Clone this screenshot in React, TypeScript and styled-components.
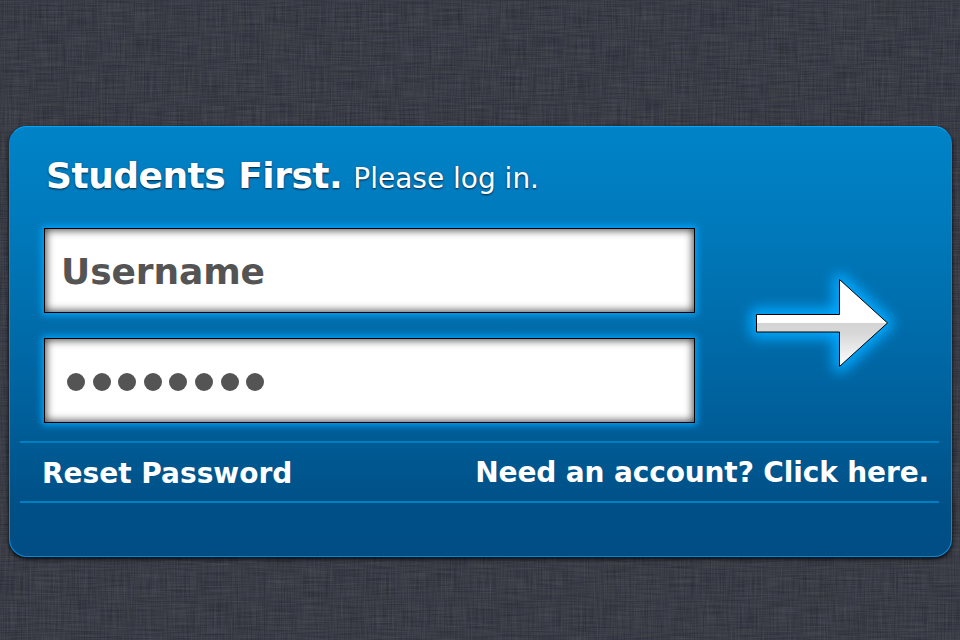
import React from "react";
import styled, { createGlobalStyle } from "styled-components";

const GlobalStyle = createGlobalStyle`
  *, *::before, *::after { box-sizing: border-box; }
  body { margin: 0; background: #393c46; }
`;

const Screen = styled.main`
  position: relative;
  width: 960px;
  height: 640px;
  padding: 126px 8px 0 9px;
  overflow: hidden;
  background: #393c46;
  font-family: "DejaVu Sans", Verdana, sans-serif;
`;

const Linen = styled.svg`
  position: absolute;
  inset: 0;
  width: 960px;
  height: 640px;
`;

const Panel = styled.form`
  position: relative;
  display: flex;
  flex-direction: column;
  width: 943px;
  height: 431px;
  border: 1px solid #008ae0;
  border-top-color: #00a6fc;
  border-radius: 18px;
  background: linear-gradient(#0083c8 0%, #007abc 22%, #0064a0 60%, #005188 87%, #004d84 100%);
  box-shadow: 0 2px 4px rgba(0, 0, 0, 0.9);
`;

const Heading = styled.h1`
  display: flex;
  align-items: baseline;
  margin: 27px 0 0 36px;
  height: 74px;
  line-height: 44px;
  color: #fff;
  text-shadow: 0 1px 2px rgba(0, 20, 40, 0.85);
  white-space: nowrap;
`;

const Brand = styled.span`
  font-size: 36px;
  font-weight: 700;
  letter-spacing: -0.5px;
  word-spacing: 1px;
`;

const Prompt = styled.span`
  margin-left: 11px;
  font-size: 28px;
  font-weight: 400;
`;

const Credentials = styled.div`
  display: flex;
  height: 213px;
  padding-left: 34px;
`;

const Fields = styled.div`
  display: flex;
  flex-direction: column;
  gap: 25px;
`;

const Field = styled.label`
  display: flex;
  align-items: center;
  width: 651px;
  height: 85px;
  padding: 0 16px;
  border: 1px solid #000;
  background: #fff;
  color: #545454;
  font-size: 36px;
  font-weight: 700;
  box-shadow: 0 0 7px 2px #00a6ff, inset 0 0 9px 1px rgba(0, 0, 0, 0.75);
`;

const Value = styled.span`
  padding-top: 1px;
  letter-spacing: -0.1px;
`;

const Dots = styled.span`
  display: flex;
  gap: 7.6px;
  padding: 2px 0 0 6px;
`;

const Dot = styled.i`
  width: 18px;
  height: 18px;
  border-radius: 50%;
  background: #545454;
`;

const Submit = styled.button`
  width: 192px;
  height: 140px;
  margin: 24px 0 0 29px;
  padding: 0;
  border: 0;
  background: none;
  svg { display: block; overflow: visible; }
`;

const Links = styled.nav`
  display: flex;
  justify-content: space-between;
  align-items: center;
  width: 919px;
  height: 62px;
  margin-left: 10px;
  padding: 3px 10px 0 22px;
  border-top: 2px solid #007fc1;
  border-bottom: 2px solid #007fc1;
`;

const TextLink = styled.a<{ $spacing: string; $lift?: boolean }>`
  color: #fff;
  font-size: 28px;
  font-weight: 700;
  line-height: 34px;
  letter-spacing: ${(p) => p.$spacing};
  padding-bottom: ${(p) => (p.$lift ? "2px" : "0")};
  white-space: nowrap;
`;

const LinenTexture = () => (
  <Linen viewBox="0 0 960 640" aria-hidden="true">
    <defs>
      <filter id="warp" x="0" y="0" width="100%" height="100%" colorInterpolationFilters="sRGB">
        <feTurbulence type="fractalNoise" baseFrequency="0.7 0.03" numOctaves="2" seed="4" />
        <feColorMatrix values="0.2 0.05 0 0 0.103  0.2 0.03 0 0 0.122  0.19 0 0.03 0 0.164  0 0 0 0 1" />
      </filter>
      <filter id="weft" x="0" y="0" width="100%" height="100%" colorInterpolationFilters="sRGB">
        <feTurbulence type="fractalNoise" baseFrequency="0.03 0.7" numOctaves="2" seed="9" />
        <feColorMatrix values="0.2 0.05 0 0 0.103  0.2 0.03 0 0 0.122  0.19 0 0.03 0 0.164  0 0 0 0 1" />
      </filter>
    </defs>
    <rect width="960" height="640" filter="url(#warp)" />
    <rect width="960" height="640" filter="url(#weft)" opacity="0.5" />
  </Linen>
);

const ArrowIcon = () => (
  <svg width="192" height="140" viewBox="724 252 192 140" aria-hidden="true">
    <defs>
      <linearGradient id="face" gradientUnits="userSpaceOnUse" x1="0" y1="279" x2="0" y2="367">
        <stop offset="0" stopColor="#fff" />
        <stop offset="0.5" stopColor="#fff" />
        <stop offset="0.5" stopColor="#d4d4d4" />
        <stop offset="0.62" stopColor="#d8d8d8" />
        <stop offset="1" stopColor="#fff" />
      </linearGradient>
      <filter id="halo" x="-30%" y="-40%" width="160%" height="180%" colorInterpolationFilters="sRGB">
        <feGaussianBlur stdDeviation="6.5" />
      </filter>
    </defs>
    <path d="M756.5 314.5H839.5V279.5L887.5 323L839.5 366.5V332H756.5Z" fill="#00a8ff" stroke="#00a8ff" strokeWidth="13" strokeLinejoin="round" filter="url(#halo)" />
    <path d="M756.5 314.5H839.5V279.5L887.5 323L839.5 366.5V332H756.5Z" fill="url(#face)" stroke="#000" />
  </svg>
);

export default function App() {
  return (
    <>
      <GlobalStyle />
      <Screen>
        <LinenTexture />
        <Panel>
          <Heading>
            <Brand>Students First.</Brand>
            <Prompt>Please log in.</Prompt>
          </Heading>
          <Credentials>
            <Fields>
              <Field><Value>Username</Value></Field>
              <Field aria-label="Password">
                <Dots>
                  {Array.from({ length: 8 }, (_, i) => <Dot key={i} />)}
                </Dots>
              </Field>
            </Fields>
            <Submit type="button" aria-label="Log in"><ArrowIcon /></Submit>
          </Credentials>
          <Links>
            <TextLink $spacing="0">Reset Password</TextLink>
            <TextLink $spacing="-0.13px" $lift>Need an account? Click here.</TextLink>
          </Links>
        </Panel>
      </Screen>
    </>
  );
}
